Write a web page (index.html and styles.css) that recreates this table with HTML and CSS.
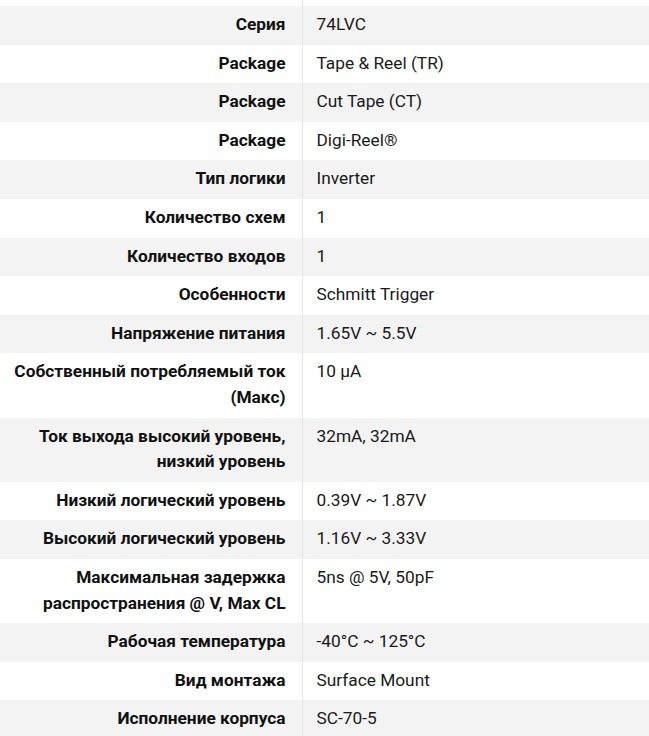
FILE: index.html
```html
<!DOCTYPE html>
<html lang="ru">
<head>
<meta charset="utf-8">
<link rel="stylesheet" href="styles.css">
</head>
<body>
<table class="specs">
<colgroup><col class="label-col"><col class="value-col"></colgroup>
<tbody>
<tr class="spacer"><th></th><td></td></tr>
<tr><th>Серия</th><td>74LVC</td></tr>
<tr><th>Package</th><td>Tape &amp; Reel (TR)</td></tr>
<tr><th>Package</th><td>Cut Tape (CT)</td></tr>
<tr><th>Package</th><td>Digi-Reel®</td></tr>
<tr><th>Тип логики</th><td>Inverter</td></tr>
<tr><th>Количество схем</th><td>1</td></tr>
<tr><th>Количество входов</th><td>1</td></tr>
<tr><th>Особенности</th><td>Schmitt Trigger</td></tr>
<tr><th>Напряжение питания</th><td>1.65V ~ 5.5V</td></tr>
<tr><th>Собственный потребляемый ток (Макс)</th><td>10 µA</td></tr>
<tr><th>Ток выхода высокий уровень, низкий уровень</th><td>32mA, 32mA</td></tr>
<tr><th>Низкий логический уровень</th><td>0.39V ~ 1.87V</td></tr>
<tr><th>Высокий логический уровень</th><td>1.16V ~ 3.33V</td></tr>
<tr><th>Максимальная задержка распространения @ V, Max CL</th><td>5ns @ 5V, 50pF</td></tr>
<tr><th>Рабочая температура</th><td>-40°C ~ 125°C</td></tr>
<tr><th>Вид монтажа</th><td>Surface Mount</td></tr>
<tr><th>Исполнение корпуса</th><td>SC-70-5</td></tr>
</tbody>
</table>
</body>
</html>
```
FILE: styles.css
```css
html, body {
  margin: 0;
  padding: 0;
  background: #fff;
}
body {
  font-family: Roboto, "Noto Sans", sans-serif;
  font-size: 16px;
  color: #1a1a1a;
}
.specs {
  width: 649px;
  border-collapse: collapse;
  table-layout: fixed;
}
.label-col {
  width: 302px;
}
.specs th, .specs td {
  line-height: 25.6px;
  padding: 6px 16px 7px;
  vertical-align: top;
}
.specs th {
  text-align: right;
  font-weight: 700;
  font-size: 17.3px;
  color: #111;
  padding-left: 10px;
  padding-right: 16px;
  border-right: 1px solid #e4e4e4;
}
.specs td {
  font-weight: 400;
  font-size: 17.3px;
  padding-left: 14px;
}
.specs tr:nth-child(even) {
  background: #f3f3f3;
}
.specs tr.spacer th, .specs tr.spacer td {
  padding: 0;
  height: 6px;
  line-height: 0;
}
```
